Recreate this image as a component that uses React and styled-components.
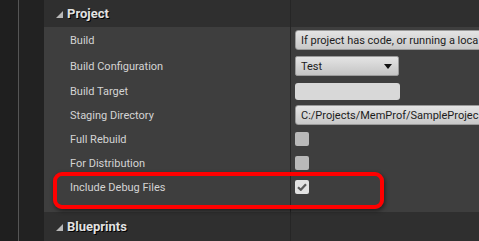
import styled, { createGlobalStyle } from "styled-components";

const GlobalStyle = createGlobalStyle`
  html, body {
    margin: 0;
    padding: 0;
    background: #202020;
  }
  body {
    font-family: Roboto, "Liberation Sans", sans-serif;
    overflow: hidden;
  }
`;

const rows = [
  { label: "Build", kind: "text", value: "If project has code, or running a loca", height: 26, wide: true },
  { label: "Build Configuration", kind: "combo", value: "Test", height: 26 },
  { label: "Build Target", kind: "text", value: "", height: 24 },
  { label: "Staging Directory", kind: "text", value: "C:/Projects/MemProf/SampleProjec", height: 24, wide: true },
  { label: "Full Rebuild", kind: "check", height: 24 },
  { label: "For Distribution", kind: "check", height: 24 },
  { label: "Include Debug Files", kind: "check", checked: true, height: 24 },
];

const App = () => {
  return (
    <>
      <GlobalStyle />
      <Page>
        <Gutter>
          <GutterStrip />
        </Gutter>
        <Panel>
          <Header>
            <HeaderName>
              <Arrow />
              <HeaderTitle>Project</HeaderTitle>
            </HeaderName>
            <ValueCell />
          </Header>
          <Body>
            {rows.map((row, index) => (
              <Row key={index} $height={row.height}>
                <Label>{row.label}</Label>
                <ValueCell>
                  {row.kind === "text" && (
                    <TextBox $wide={row.wide}>{row.value}</TextBox>
                  )}
                  {row.kind === "combo" && (
                    <Combo>
                      <span>{row.value}</span>
                      <ComboArrow />
                    </Combo>
                  )}
                  {row.kind === "check" && (
                    <CheckBox $checked={row.checked}>
                      {row.checked && (
                        <svg width="10" height="8" viewBox="0 0 10 8">
                          <path
                            d="M1 4.2 L3.8 6.8 L9 1.2"
                            fill="none"
                            stroke="#5a5a5a"
                            strokeWidth="2.2"
                          />
                        </svg>
                      )}
                    </CheckBox>
                  )}
                </ValueCell>
              </Row>
            ))}
            <BodyPad>
              <PadName />
              <ValueCell />
            </BodyPad>
          </Body>
          <Header $tall>
            <HeaderName>
              <Arrow />
              <HeaderTitle>Blueprints</HeaderTitle>
            </HeaderName>
            <ValueCell />
          </Header>
          <Highlight />
        </Panel>
      </Page>
    </>
  );
};

const Page = styled.div`
  display: flex;
  width: 479px;
  height: 241px;
  overflow: hidden;
`;

const Gutter = styled.div`
  width: 44px;
  flex-shrink: 0;
  background: #222222;
  display: flex;
`;

const GutterStrip = styled.div`
  width: 18px;
  background: #1f1f1f;
  border-right: 1px solid #555555;
`;

const Panel = styled.div`
  position: relative;
  flex: 1;
  display: flex;
  flex-direction: column;
  min-width: 0;
`;

const Header = styled.div`
  display: grid;
  grid-template-columns: 246px 1fr;
  height: ${(p) => (p.$tall ? "29px" : "27px")};
  background: #2f2f2f;
  flex-shrink: 0;
`;

const HeaderName = styled.div`
  display: flex;
  align-items: center;
  padding-left: 12px;
  gap: 4px;
`;

const Arrow = styled.span`
  width: 0;
  height: 0;
  border-left: 7px solid transparent;
  border-bottom: 7px solid #b8b8b8;
  margin-top: 2px;
`;

const HeaderTitle = styled.span`
  font-size: 13px;
  font-weight: 700;
  color: #e2e2e2;
  text-shadow: 1px 1px 0 #000000;
`;

const Body = styled.div`
  display: flex;
  flex-direction: column;
  background: #3e3e3e;
`;

const Row = styled.div`
  display: grid;
  grid-template-columns: 246px 1fr;
  height: ${(p) => p.$height}px;
`;

const BodyPad = styled.div`
  display: grid;
  grid-template-columns: 246px 1fr;
  height: 13px;
`;

const PadName = styled.div``;

const Label = styled.div`
  display: flex;
  align-items: center;
  padding-left: 26px;
  font-size: 11px;
  color: #d4d4d4;
  white-space: nowrap;
`;

const ValueCell = styled.div`
  display: flex;
  align-items: center;
  border-left: 1px solid #262626;
  padding-left: 4px;
  min-width: 0;
  overflow: hidden;
`;

const TextBox = styled.div`
  box-sizing: border-box;
  flex-shrink: 0;
  width: ${(p) => (p.$wide ? "240px" : "105px")};
  height: ${(p) => (p.$wide ? "20px" : "17px")};
  padding-left: 5px;
  display: flex;
  align-items: center;
  border-radius: 3px;
  font-size: 11px;
  color: #1c1c1c;
  white-space: nowrap;
  overflow: hidden;
  background: ${(p) =>
    p.$wide ? "linear-gradient(#e4e4e4, #c8c8c8)" : "#d8d8d8"};
  border: ${(p) => (p.$wide ? "1px solid #9a9a9a" : "none")};
`;

const Combo = styled.div`
  box-sizing: border-box;
  width: 104px;
  height: 20px;
  padding: 0 6px 0 5px;
  display: flex;
  align-items: center;
  justify-content: space-between;
  border: 1px solid #9a9a9a;
  border-radius: 2px;
  background: linear-gradient(#e4e4e4, #c4c4c4);
  font-size: 11px;
  color: #1c1c1c;
`;

const ComboArrow = styled.span`
  width: 0;
  height: 0;
  border-left: 4px solid transparent;
  border-right: 4px solid transparent;
  border-top: 5px solid #111111;
`;

const CheckBox = styled.div`
  width: 14px;
  height: 14px;
  border-radius: 2px;
  background: ${(p) => (p.$checked ? "#e2e2e2" : "#b9b9b9")};
  display: flex;
  align-items: center;
  justify-content: center;
`;

const Highlight = styled.div`
  position: absolute;
  left: 9px;
  top: 172px;
  width: 331px;
  height: 37px;
  box-sizing: border-box;
  border: 4px solid #ff0000;
  border-radius: 9px;
  box-shadow: 1px 2px 4px rgba(0, 0, 0, 0.5);
  pointer-events: none;
`;

export default App;
